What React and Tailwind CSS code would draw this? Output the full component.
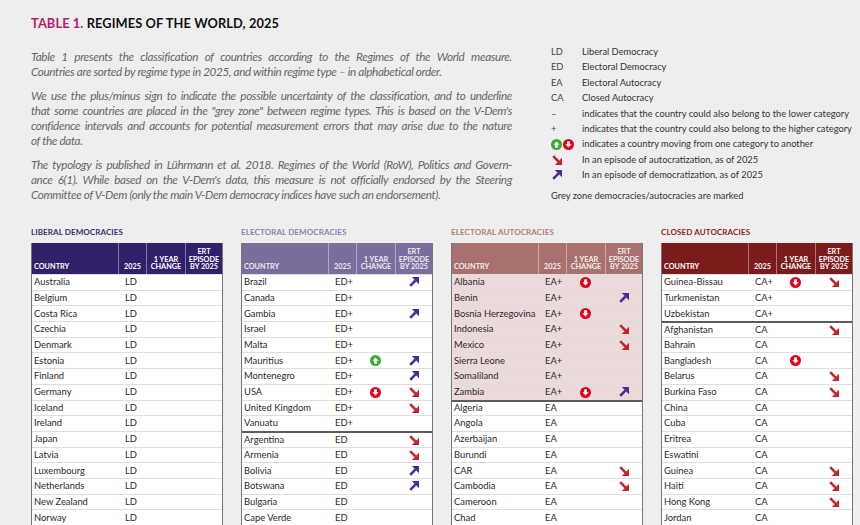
const LD_ROWS = [
  ['Australia', 'LD'], ['Belgium', 'LD'], ['Costa Rica', 'LD'], ['Czechia', 'LD'],
  ['Denmark', 'LD'], ['Estonia', 'LD'], ['Finland', 'LD'], ['Germany', 'LD'],
  ['Iceland', 'LD'], ['Ireland', 'LD'], ['Japan', 'LD'], ['Latvia', 'LD'],
  ['Luxembourg', 'LD'], ['Netherlands', 'LD'], ['New Zealand', 'LD'], ['Norway', 'LD'],
]

const ED_ROWS = [
  ['Brazil', 'ED+', null, 'dem'], ['Canada', 'ED+'], ['Gambia', 'ED+', null, 'dem'],
  ['Israel', 'ED+'], ['Malta', 'ED+'], ['Mauritius', 'ED+', 'up', 'dem'],
  ['Montenegro', 'ED+', null, 'dem'], ['USA', 'ED+', 'down', 'aut'],
  ['United Kingdom', 'ED+', null, 'aut'], ['Vanuatu', 'ED+'],
  ['Argentina', 'ED', null, 'aut', 'split'], ['Armenia', 'ED', null, 'aut'],
  ['Bolivia', 'ED', null, 'dem'], ['Botswana', 'ED', null, 'dem'],
  ['Bulgaria', 'ED'], ['Cape Verde', 'ED'],
]

const EA_ROWS = [
  ['Albania', 'EA+', 'down', null, 'grey'], ['Benin', 'EA+', null, 'dem', 'grey'],
  ['Bosnia Herzegovina', 'EA+', 'down', null, 'grey'], ['Indonesia', 'EA+', null, 'aut', 'grey'],
  ['Mexico', 'EA+', null, 'aut', 'grey'], ['Sierra Leone', 'EA+', null, null, 'grey'],
  ['Somaliland', 'EA+', null, null, 'grey'], ['Zambia', 'EA+', 'down', 'dem', 'grey'],
  ['Algeria', 'EA', null, null, 'split'], ['Angola', 'EA'], ['Azerbaijan', 'EA'],
  ['Burundi', 'EA'], ['CAR', 'EA', null, 'aut'], ['Cambodia', 'EA', null, 'aut'],
  ['Cameroon', 'EA'], ['Chad', 'EA'],
]

const CA_ROWS = [
  ['Guinea-Bissau', 'CA+', 'down', 'aut'], ['Turkmenistan', 'CA+'], ['Uzbekistan', 'CA+'],
  ['Afghanistan', 'CA', null, 'aut', 'split'], ['Bahrain', 'CA'], ['Bangladesh', 'CA', 'down'],
  ['Belarus', 'CA', null, 'aut'], ['Burkina Faso', 'CA', null, 'aut'], ['China', 'CA'],
  ['Cuba', 'CA'], ['Eritrea', 'CA'], ['Eswatini', 'CA'], ['Guinea', 'CA', null, 'aut'],
  ['Haiti', 'CA', null, 'aut'], ['Hong Kong', 'CA', null, 'aut'], ['Jordan', 'CA'],
]

// paragraphs are set line by line so the breaks match the printed page
const PARAGRAPHS = [
  [
    'Table 1 presents the classification of countries according to the Regimes of the World measure.',
    'Countries are sorted by regime type in 2025, and within regime type – in alphabetical order.',
  ],
  [
    'We use the plus/minus sign to indicate the possible uncertainty of the classification, and to underline',
    'that some countries are placed in the "grey zone" between regime types. This is based on the V-Dem\'s',
    'confidence intervals and accounts for potential measurement errors that may arise due to the nature',
    'of the data.',
  ],
  [
    'The typology is published in Lührmann et al. 2018. Regimes of the World (RoW), Politics and Govern-',
    'ance 6(1). While based on the V-Dem\'s data, this measure is not officially endorsed by the Steering',
    'Committee of V-Dem (only the main V-Dem democracy indices have such an endorsement).',
  ],
]

const DownCircle = () => (
  <svg width="11" height="11" viewBox="0 0 12 12">
    <circle cx="6" cy="6" r="6" fill="#e2001a" />
    <path d="M4.5 2.4h3v3.2h1.9L6 9.4 2.6 5.6h1.9z" fill="#fff" />
  </svg>
)

const UpCircle = () => (
  <svg width="11" height="11" viewBox="0 0 12 12">
    <circle cx="6" cy="6" r="6" fill="#3aaa35" />
    <path d="M4.5 9.6h3V6.4h1.9L6 2.6 2.6 6.4h1.9z" fill="#fff" />
  </svg>
)

const AutArrow = () => (
  <svg width="10" height="10" viewBox="0 0 10 10">
    <path d="M1.2 1.2L6.6 6.6" stroke="#c0272d" strokeWidth="2.6" />
    <path d="M10 10H2.8L10 2.8z" fill="#c0272d" />
  </svg>
)

const DemArrow = () => (
  <svg width="10" height="10" viewBox="0 0 10 10">
    <path d="M1.2 8.8L6.6 3.4" stroke="#4c2c92" strokeWidth="2.6" />
    <path d="M10 0H2.8L10 7.2z" fill="#4c2c92" />
  </svg>
)

const Row = ({ row }) => {
  const [country, value, change, ert, mark] = row
  return (
    <div
      className={`flex h-[15.7px] items-center text-[9.4px] text-[#2a2a2a] ${mark === 'grey' ? 'bg-[#ecdada]' : 'bg-white'} ${mark === 'split' ? 'border-t-2 border-t-[#5c5c5c]' : 'border-t border-t-[#dedede]'}`}
    >
      <div className="w-[86px] pl-[2px] whitespace-nowrap">{country}</div>
      <div className="w-[28px] pl-[7px]">{value}</div>
      <div className="w-[39px] flex justify-center">
        {change === 'down' && <DownCircle />}
        {change === 'up' && <UpCircle />}
      </div>
      <div className="flex-1 flex justify-center">
        {ert === 'aut' && <AutArrow />}
        {ert === 'dem' && <DemArrow />}
      </div>
    </div>
  )
}

const RegimeTable = ({ title, labelColor, headColor, headText, rows }) => (
  <div className="w-[192px]">
    <div className={`text-[8px] font-bold tracking-[0.1px] h-[16px] leading-[10px] ${labelColor}`}>{title}</div>
    <div className="border-x-[1.5px] border-[#777]">
      <div className={`flex h-[31px] items-end text-[7.3px] font-bold leading-[7.6px] text-center pb-[3px] ${headColor} ${headText}`}>
        <div className="w-[86px] text-left pl-[2px]">COUNTRY</div>
        <div className="w-[28px] h-[31px] flex items-end justify-center pb-[3px] -mb-[3px] border-l border-white/40">2025</div>
        <div className="w-[39px] h-[31px] flex items-end justify-center pb-[3px] -mb-[3px] border-l border-white/40">1 YEAR<br />CHANGE</div>
        <div className="flex-1 h-[31px] flex items-end justify-center pb-[3px] -mb-[3px] border-l border-white/40">ERT<br />EPISODE<br />BY 2025</div>
      </div>
      {rows.map((r) => (
        <Row key={r[0]} row={r} />
      ))}
    </div>
  </div>
)

const legend = [
  ['LD', 'Liberal Democracy'],
  ['ED', 'Electoral Democracy'],
  ['EA', 'Electoral Autocracy'],
  ['CA', 'Closed Autocracy'],
  ['–', 'indicates that the country could also belong to the lower category'],
  ['+', 'indicates that the country could also belong to the higher category'],
]

export default function App() {
  return (
    <div className="w-[860px] h-[525px] overflow-hidden bg-[#eeeeee] pl-[31px] pt-[14px] font-['Lato',sans-serif]">
      <div className="flex">
        <div className="w-[481px]">
          <h1 className="text-[12.8px] font-bold tracking-[0.1px] text-[#111] h-[20px]">
            <span className="text-[#bd1769]">TABLE 1.</span> REGIMES OF THE WORLD, 2025
          </h1>
          <div className="mt-[15px] text-[11.7px] leading-[15px] italic text-[#666] tracking-[-0.35px] flex flex-col gap-[9px]">
            {PARAGRAPHS.map((lines, i) => (
              <div key={i}>
                {lines.map((line, j) => (
                  <div
                    key={j}
                    className={`whitespace-nowrap ${j < lines.length - 1 ? 'text-justify [text-align-last:justify]' : ''}`}
                  >
                    {line}
                  </div>
                ))}
              </div>
            ))}
          </div>
        </div>
        <div className="ml-[39px] mt-[30px] text-[9.3px] leading-[15.4px] text-[#333] whitespace-nowrap">
          {legend.map(([k, v]) => (
            <div key={v} className="flex">
              <span className="w-[31px] text-[#444]">{k}</span>
              <span>{v}</span>
            </div>
          ))}
          <div className="flex items-center h-[15.4px]">
            <span className="w-[31px] flex gap-[1px]">
              <UpCircle />
              <DownCircle />
            </span>
            <span>indicates a country moving from one category to another</span>
          </div>
          <div className="flex items-center h-[15.4px]">
            <span className="w-[31px] pl-[1px]"><AutArrow /></span>
            <span>In an episode of autocratization, as of 2025</span>
          </div>
          <div className="flex items-center h-[15.4px]">
            <span className="w-[31px] pl-[1px]"><DemArrow /></span>
            <span>In an episode of democratization, as of 2025</span>
          </div>
          <div className="mt-[5px]">Grey zone democracies/autocracies are marked</div>
        </div>
      </div>
      <div className="flex gap-[18px] mt-[24px]">
        <RegimeTable title="LIBERAL DEMOCRACIES" labelColor="text-[#3b2d72]" headColor="bg-[#33206b]" headText="text-white" rows={LD_ROWS} />
        <RegimeTable title="ELECTORAL DEMOCRACIES" labelColor="text-[#8c84a8]" headColor="bg-[#7a6e9c]" headText="text-[#ece9f3]" rows={ED_ROWS} />
        <RegimeTable title="ELECTORAL AUTOCRACIES" labelColor="text-[#b47e7b]" headColor="bg-[#a8706f]" headText="text-[#f6ecec]" rows={EA_ROWS} />
        <RegimeTable title="CLOSED AUTOCRACIES" labelColor="text-[#8e1f1f]" headColor="bg-[#7b1c1c]" headText="text-white" rows={CA_ROWS} />
      </div>
    </div>
  )
}
